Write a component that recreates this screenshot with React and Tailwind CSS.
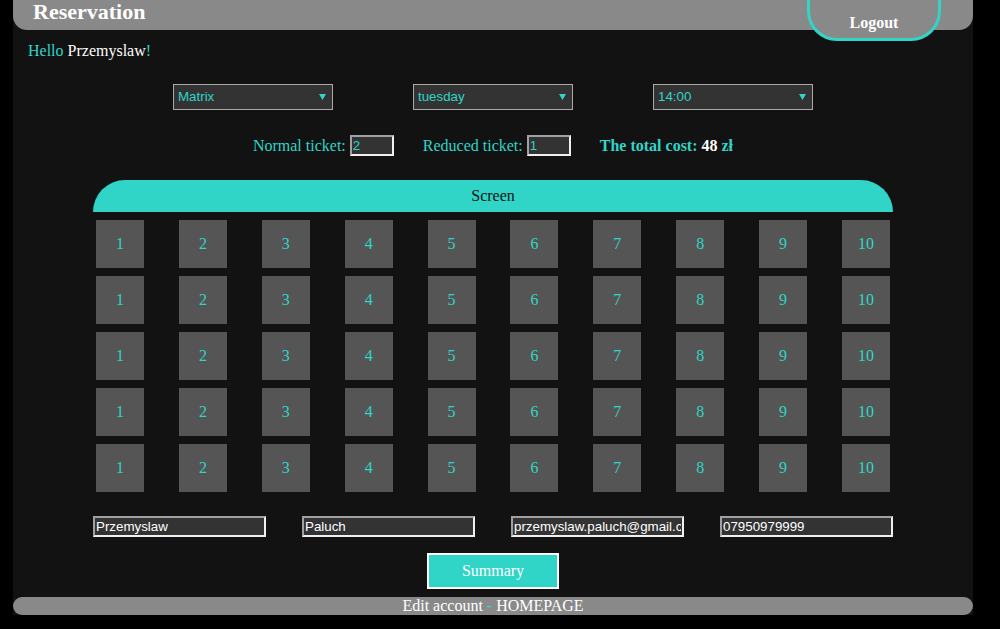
import React from "react";

const TEAL = "text-[#30d5c8]";

function Select({ value }) {
  return (
    <div className="relative w-[160px] h-[26px] bg-[#333333] border border-[#a9a9a9] flex items-center pl-[4px]">
      <span className="text-[#30d5c8] text-[13.33px] font-['Liberation_Sans',Arial,sans-serif] leading-[16px]">{value}</span>
      <svg className="absolute right-[6px] top-[9px]" width="7" height="6" viewBox="0 0 7 6">
        <path d="M0 0 L7 0 L3.5 6 Z" fill="#30d5c8" />
      </svg>
    </div>
  );
}

function SmallInput({ value, w, color }) {
  return (
    <input
      readOnly
      value={value}
      className={`h-[21px] ${w} bg-[#333333] border-2 border-t-[#a0a0a0] border-l-[#a0a0a0] border-b-[#f0f0f0] border-r-[#f0f0f0] px-[1px] ${color} text-[13.33px] font-['Liberation_Sans',Arial,sans-serif] outline-none`}
    />
  );
}

export default function App() {
  const rows = [0, 1, 2, 3, 4];
  const cols = [1, 2, 3, 4, 5, 6, 7, 8, 9, 10];
  return (
    <div className="min-h-[629px] bg-black font-['Liberation_Serif','Times_New_Roman',serif]">
      <div className="ml-[13px] w-[960px] bg-[#121212] overflow-hidden">
        {/* header */}
        <div className="relative h-[30px] bg-[#898989] rounded-b-[14px]">
          <div className="pl-[20px] pt-[1px] text-[22px] leading-[22px] font-bold text-white">Reservation</div>
        </div>
        <div className="relative">
          <div className="absolute left-[794px] top-[-42px] w-[134px] h-[53px] bg-[#898989] border-[3px] border-[#30d5c8] rounded-b-[30px] flex items-end justify-center pb-[6px]">
            <span className="text-white font-bold text-[16px] leading-[18px]">Logout</span>
          </div>
        </div>

        <div className="pl-[15px] mt-[12px] text-[16px] leading-[18px]">
          <span className={TEAL}>Hello </span>
          <span className="text-white">Przemyslaw</span>
          <span className={TEAL}>!</span>
        </div>

        <div className="mt-[24px] flex justify-center gap-[80px]">
          <Select value="Matrix" />
          <Select value="tuesday" />
          <Select value="14:00" />
        </div>

        <div className="mt-[25px] flex justify-center items-center text-[16px] leading-[18px]">
          <span className={TEAL}>Normal ticket:</span>
          <span className="ml-[4px]"><SmallInput value="2" w="w-[44px]" color="text-[#30d5c8]" /></span>
          <span className={`${TEAL} ml-[29px]`}>Reduced ticket:</span>
          <span className="ml-[4px]"><SmallInput value="1" w="w-[44px]" color="text-[#30d5c8]" /></span>
          <span className={`${TEAL} ml-[29px] font-bold`}>The total cost: </span>
          <span className="text-white font-bold ml-[4px]">48</span>
          <span className={`${TEAL} font-bold ml-[4px]`}>zł</span>
        </div>

        <div className="mt-[24px] w-[800px] mx-auto">
          <div className="h-[32px] bg-[#30d5c8] rounded-t-[32px] flex items-center justify-center text-[16px] text-[#111]">
            Screen
          </div>
          <div className="pt-[8px] flex flex-col gap-[8px] px-[3px]">
            {rows.map((r) => (
              <div key={r} className="flex justify-between">
                {cols.map((c) => (
                  <div key={c} className="w-[48px] h-[48px] bg-[#555555] flex items-center justify-center text-[#30d5c8] text-[16px]">
                    {c}
                  </div>
                ))}
              </div>
            ))}
          </div>
        </div>

        <div className="mt-[24px] w-[800px] mx-auto flex justify-between">
          <SmallInput value="Przemyslaw" w="w-[173px]" color="text-white" />
          <SmallInput value="Paluch" w="w-[173px]" color="text-white" />
          <SmallInput value="przemyslaw.paluch@gmail.com" w="w-[173px]" color="text-white" />
          <SmallInput value="07950979999" w="w-[173px]" color="text-white" />
        </div>

        <div className="mt-[16px] flex justify-center">
          <div className="w-[132px] h-[36px] bg-[#30d5c8] border-2 border-white flex items-center justify-center text-white text-[16px]">
            Summary
          </div>
        </div>

        <div className="mt-[8px] h-[18px] bg-[#898989] rounded-full flex items-center justify-center text-[16px] leading-[18px]">
          <span className="text-white">Edit account</span>
          <span className={`${TEAL} mx-[4px]`}>-</span>
          <span className="text-white">HOMEPAGE</span>
        </div>
      </div>
    </div>
  );
}
